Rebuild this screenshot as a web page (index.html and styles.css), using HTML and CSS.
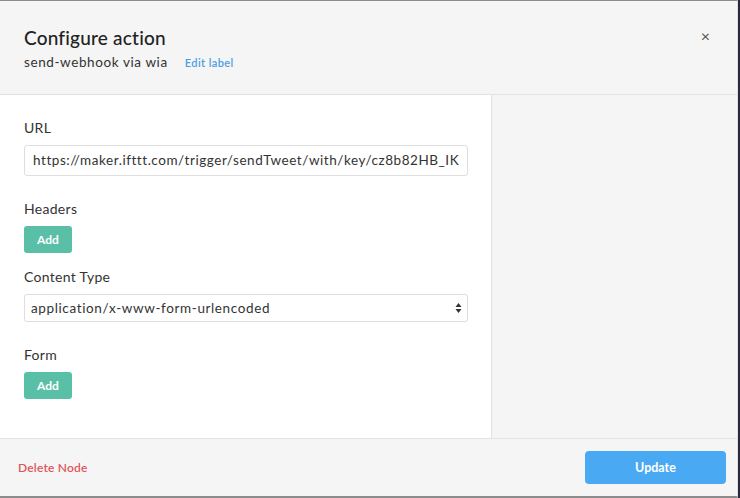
FILE: index.html
```html
<!DOCTYPE html>
<html lang="en">
<head>
    <meta charset="UTF-8">
    <title>Configure action</title>
    <link rel="stylesheet" href="styles.css">
</head>
<body>
    <div class="modal">
        <header class="modal-header">
            <div>
                <h1>Configure action</h1>
                <div class="subtitle">
                    <span>send-webhook via wia</span>
                    <a class="edit-label" href="#">Edit label</a>
                </div>
            </div>
            <span class="close">&times;</span>
        </header>
        <div class="modal-body">
            <div class="form-panel">
                <label class="field-label">URL</label>
                <div class="text-input">https://maker.ifttt.com/trigger/sendTweet/with/key/cz8b82HB_IK</div>

                <label class="field-label">Headers</label>
                <button class="add-button">Add</button>

                <label class="field-label">Content Type</label>
                <div class="select-input">
                    <span>application/x-www-form-urlencoded</span>
                    <svg class="arrows" width="7" height="12" viewBox="0 0 7 12">
                        <path d="M3.5 1 L6.5 5 L0.5 5 Z" fill="#333"/>
                        <path d="M3.5 11 L6.5 7 L0.5 7 Z" fill="#333"/>
                    </svg>
                </div>

                <label class="field-label">Form</label>
                <button class="add-button">Add</button>
            </div>
            <div class="side-panel"></div>
        </div>
        <footer class="modal-footer">
            <a class="delete-link" href="#">Delete Node</a>
            <button class="update-button">Update</button>
        </footer>
    </div>
</body>
</html>
```

FILE: styles.css
```css
body {
    margin: 0;
    background-color: #2b2742;
    font-family: Lato, "Open Sans", sans-serif;
    color: #333;
}
.modal {
    width: 737px;
    height: 495px;
    background-color: #f5f5f5;
    border-top: 1px solid #8c8c8c;
    border-bottom: 2px solid #8c8c8c;
    border-right: 1px solid #e2e2e2;
    display: flex;
    flex-direction: column;
}
.modal-header {
    height: 94px;
    box-sizing: border-box;
    padding: 25px 27px 0 24px;
    border-bottom: 1px solid #e2e2e2;
    display: flex;
    justify-content: space-between;
    align-items: flex-start;
}
h1 {
    margin: 0;
    font-size: 19px;
    font-weight: 500;
    color: #222;
    letter-spacing: 0.2px;
}
.subtitle {
    margin-top: 5px;
    font-size: 13.5px;
    color: #333;
    letter-spacing: 0.6px;
}
.edit-label {
    margin-left: 13px;
    font-size: 11px;
    color: #4a9ee2;
    text-decoration: none;
    font-weight: 600;
    letter-spacing: 0.4px;
}
.close {
    font-size: 16px;
    color: #555;
    line-height: 1;
    margin-top: 2px;
}
.modal-body {
    flex: 1;
    display: flex;
}
.form-panel {
    width: 492px;
    box-sizing: border-box;
    background-color: #fff;
    border-right: 1px solid #e2e2e2;
    padding: 24px 24px 0 24px;
    display: flex;
    flex-direction: column;
    align-items: flex-start;
}
.side-panel {
    flex: 1;
}
.field-label {
    font-size: 14px;
    color: #333;
    margin-bottom: 9px;
    letter-spacing: 0.3px;
}
.text-input {
    width: 444px;
    height: 31px;
    box-sizing: border-box;
    border: 1px solid #dedede;
    border-radius: 3px;
    padding: 0 8px;
    font-size: 13.5px;
    line-height: 29px;
    color: #333;
    white-space: nowrap;
    overflow: hidden;
    letter-spacing: 0.55px;
    margin-bottom: 24px;
}
.select-input {
    width: 444px;
    height: 28px;
    box-sizing: border-box;
    border: 1px solid #dedede;
    border-radius: 3px;
    padding: 0 5px 0 6px;
    font-size: 13.5px;
    color: #333;
    letter-spacing: 0.62px;
    display: flex;
    align-items: center;
    justify-content: space-between;
    margin-bottom: 24px;
}
.add-button {
    background-color: #59c0a7;
    color: #fff;
    border: none;
    border-radius: 3px;
    width: 48px;
    height: 27px;
    font-family: inherit;
    font-size: 12px;
    font-weight: 700;
    margin-bottom: 15px;
    padding: 0;
}
.modal-footer {
    height: 57px;
    border-top: 1px solid #e2e2e2;
    display: flex;
    justify-content: space-between;
    align-items: center;
    padding: 0 11px 0 18px;
}
.delete-link {
    font-size: 12px;
    color: #e0555c;
    text-decoration: none;
    font-weight: 600;
    letter-spacing: 0.2px;
}
.update-button {
    width: 141px;
    height: 33px;
    background-color: #4aa9f3;
    color: #fff;
    border: none;
    border-radius: 4px;
    font-family: inherit;
    font-size: 12.5px;
    font-weight: 700;
}
```
